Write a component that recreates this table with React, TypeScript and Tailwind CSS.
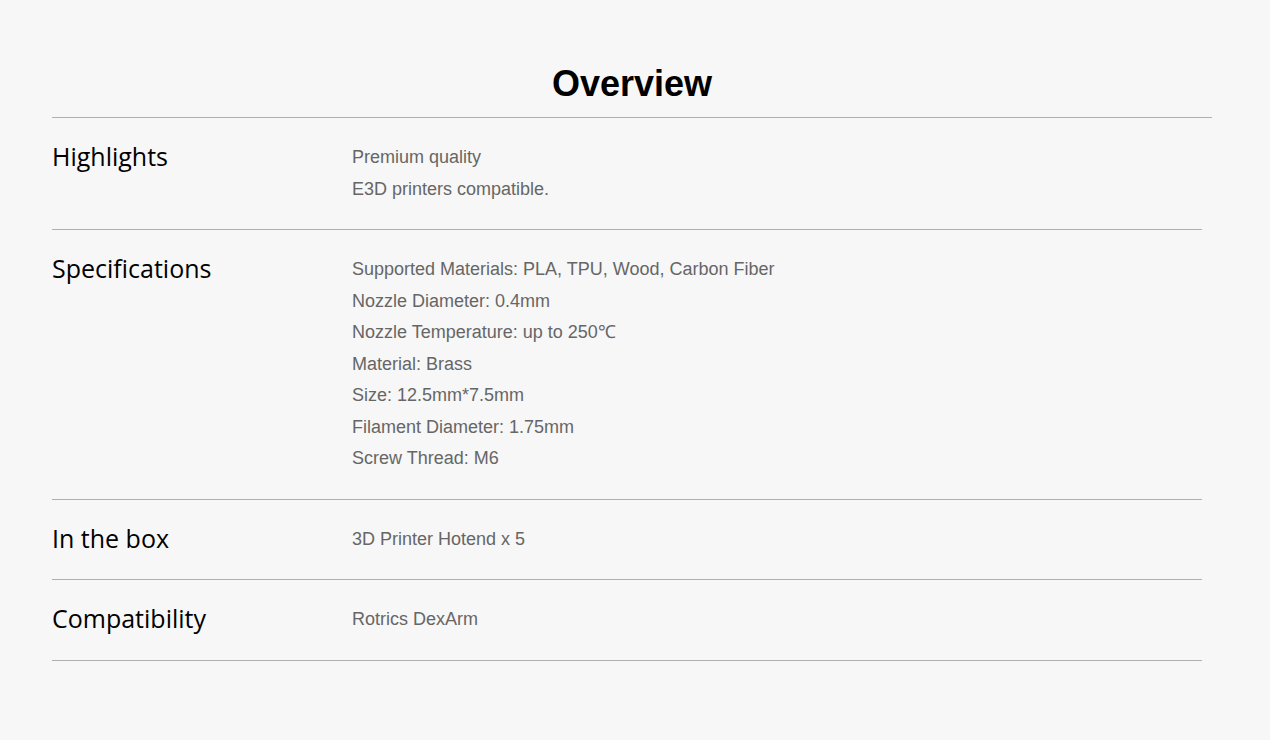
import React from "react"

const rows = [
    { label: "Highlights", items: ["Premium quality", "E3D printers compatible."] },
    {
        label: "Specifications",
        items: [
            "Supported Materials: PLA, TPU, Wood, Carbon Fiber",
            "Nozzle Diameter: 0.4mm",
            "Nozzle Temperature: up to 250℃",
            "Material: Brass",
            "Size: 12.5mm*7.5mm",
            "Filament Diameter: 1.75mm",
            "Screw Thread: M6",
        ],
    },
    { label: "In the box", items: ["3D Printer Hotend x 5"] },
    { label: "Compatibility", items: ["Rotrics DexArm"] },
]

const App = () => {
    return (
        <div className="min-h-[740px] w-full bg-[#f7f7f7] pt-[63px]">
            <section className="ml-[52px] w-[1160px]">
                <h2 className="border-b border-[#b0b0b0] pb-[13px] text-center font-['Liberation_Sans',Arial,sans-serif] text-[36px] font-bold leading-[41px] text-black">
                    Overview
                </h2>
                <div className="w-[1150px]">
                    {rows.map((row) => (
                        <div
                            key={row.label}
                            className="flex border-b border-[#b0b0b0] py-6"
                        >
                            <h3 className="-mt-px w-[300px] shrink-0 font-['Open_Sans',sans-serif] text-[25px] leading-[31.5px] text-black">
                                {row.label}
                            </h3>
                            <ul className="font-['Liberation_Sans',Arial,sans-serif] text-[18px] leading-[31.5px] text-[#666]">
                                {row.items.map((item) => (
                                    <li key={item}>{item}</li>
                                ))}
                            </ul>
                        </div>
                    ))}
                </div>
            </section>
        </div>
    )
}

export default App
